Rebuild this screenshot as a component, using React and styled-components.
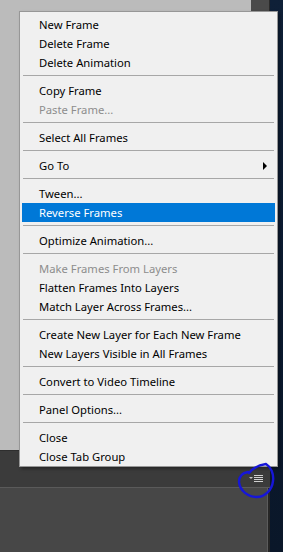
import React from 'react'
import styled, { createGlobalStyle } from 'styled-components'

const GlobalStyle = createGlobalStyle`
  html, body {
    margin: 0;
    padding: 0;
    background: #474747;
  }
`

const items = [
  { label: 'New Frame' },
  { label: 'Delete Frame' },
  { label: 'Delete Animation' },
  { sep: true },
  { label: 'Copy Frame' },
  { label: 'Paste Frame...', disabled: true },
  { sep: true },
  { label: 'Select All Frames' },
  { sep: true },
  { label: 'Go To', sub: true },
  { sep: true },
  { label: 'Tween...' },
  { label: 'Reverse Frames', active: true },
  { sep: true },
  { label: 'Optimize Animation...' },
  { sep: true },
  { label: 'Make Frames From Layers', disabled: true },
  { label: 'Flatten Frames Into Layers' },
  { label: 'Match Layer Across Frames...' },
  { sep: true },
  { label: 'Create New Layer for Each New Frame' },
  { label: 'New Layers Visible in All Frames' },
  { sep: true },
  { label: 'Convert to Video Timeline' },
  { sep: true },
  { label: 'Panel Options...' },
  { sep: true },
  { label: 'Close' },
  { label: 'Close Tab Group' },
]

const App = () => {
  return (
    <>
      <GlobalStyle />
      <Screen>
        <Main>
          <Workspace>
            <TopBlock />
          </Workspace>
          <TabBar>
            <PanelMenuIcon>
              <svg width="15" height="7" viewBox="0 0 15 7">
                <path d="M0 2 L4 2 L2 4 Z" fill="#c4c4c4" />
                <rect x="5" y="0" width="9" height="1" fill="#d0d0d0" />
                <rect x="5" y="2" width="9" height="1" fill="#d0d0d0" />
                <rect x="5" y="4" width="9" height="1" fill="#d0d0d0" />
                <rect x="5" y="6" width="9" height="1" fill="#d0d0d0" />
              </svg>
            </PanelMenuIcon>
          </TabBar>
          <Panel />
        </Main>
        <Strip />

        <Menu>
          {items.map((item, i) =>
            item.sep ? (
              <Separator key={i} />
            ) : (
              <Item key={i} $disabled={item.disabled} $active={item.active}>
                <span>{item.label}</span>
                {item.sub && <SubArrow />}
              </Item>
            )
          )}
        </Menu>

        <Scribble width="42" height="42" viewBox="0 0 42 42">
          <path
            d="M13 13 C17 8 22 5 30 4 C35 7 38 14 37 21 C36 30 29 37 21 37 C12 37 4 31 3 22 C3 17 6 13 12 12"
            fill="none"
            stroke="#1616d8"
            strokeWidth="2.4"
            strokeLinecap="round"
            strokeLinejoin="round"
          />
        </Scribble>
      </Screen>
    </>
  )
}

export default App

const Screen = styled.div`
  position: relative;
  width: 283px;
  height: 552px;
  display: flex;
  overflow: hidden;
  font-family: 'Noto Sans', 'Liberation Sans', sans-serif;
`

const Main = styled.div`
  width: 270px;
  display: flex;
  flex-direction: column;
`

const Workspace = styled.div`
  height: 450px;
  background: #bbbbbb;
  display: flex;
  justify-content: flex-end;
  align-items: flex-start;
`

const TopBlock = styled.div`
  width: 18px;
  height: 11px;
  background: #4a4a4a;
  border-right: 1px solid #2a2a2a;
`

const TabBar = styled.div`
  height: 31px;
  background: #3b3b3b;
  border-top: 1px solid #2e2e2e;
  border-bottom: 1px solid #5a5a5a;
  display: flex;
  justify-content: flex-end;
  align-items: flex-end;
  padding: 0 6px 5px 0;
  box-sizing: content-box;
`

const PanelMenuIcon = styled.div`
  width: 15px;
  height: 7px;
  display: flex;
`

const Panel = styled.div`
  flex: 1;
  background: #474747;
  box-shadow: inset -2px 0 0 #262626, inset -3px 0 0 #5c5c5c;
`

const Strip = styled.div`
  flex: 1;
  background: linear-gradient(180deg, #0f2038 0%, #0b1a2f 60%, #0a1729 100%);
`

const Menu = styled.div`
  position: absolute;
  left: 19px;
  top: 11px;
  width: 259px;
  box-sizing: border-box;
  background: #f0f0f0;
  border: 1px solid #979797;
  padding: 3px 2px 0;
  box-shadow: 2px 2px 3px rgba(0, 0, 0, 0.35);
`

const Item = styled.div`
  height: 19px;
  line-height: 18px;
  padding: 0 8px 0 17px;
  display: flex;
  align-items: center;
  justify-content: space-between;
  font-size: 11.25px;
  white-space: nowrap;
  color: ${p => (p.$active ? '#ffffff' : p.$disabled ? '#8d8d8d' : '#000000')};
  background: ${p => (p.$active ? '#0078d7' : 'transparent')};
`

const SubArrow = styled.span`
  width: 0;
  height: 0;
  border-top: 4px solid transparent;
  border-bottom: 4px solid transparent;
  border-left: 4px solid #000;
`

const Separator = styled.div`
  height: 1px;
  margin: 3px 1px 5px;
  background: #a7a7a7;
`

const Scribble = styled.svg`
  position: absolute;
  left: 236px;
  top: 460px;
`
